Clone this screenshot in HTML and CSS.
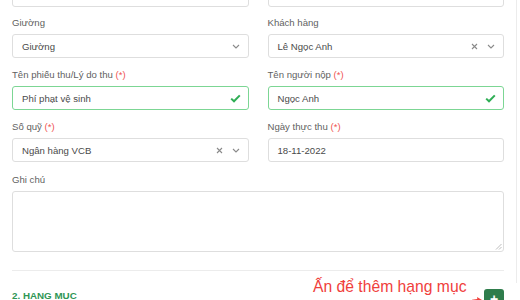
FILE: index.html
```html
<!DOCTYPE html>
<html lang="vi">
<head>
<meta charset="utf-8">
<link rel="stylesheet" href="styles.css">
</head>
<body>
<div class="frame">
  <div class="grid prev">
    <div class="control"></div>
    <div class="control"></div>
  </div>
  <div class="grid form">
    <div class="group">
      <label class="label">Giường</label>
      <div class="control select">
        <span class="value">Giường</span>
        <span class="icons">
          <svg class="chev" width="8" height="5" viewBox="0 0 8 5"><path d="M1 1 L4 4 L7 1" fill="none" stroke="#8a8a8a" stroke-width="1.1"/></svg>
        </span>
      </div>
    </div>
    <div class="group">
      <label class="label">Khách hàng</label>
      <div class="control select">
        <span class="value">Lê Ngọc Anh</span>
        <span class="icons">
          <svg class="clear" width="7" height="7" viewBox="0 0 7 7"><path d="M1 1 L6 6 M6 1 L1 6" fill="none" stroke="#8a8a8a" stroke-width="1.1"/></svg>
          <svg class="chev" width="8" height="5" viewBox="0 0 8 5"><path d="M1 1 L4 4 L7 1" fill="none" stroke="#8a8a8a" stroke-width="1.1"/></svg>
        </span>
      </div>
    </div>
    <div class="group">
      <label class="label">Tên phiếu thu/Lý do thu <span class="req">(*)</span></label>
      <div class="control valid">
        <span class="value">Phí phạt vệ sinh</span>
        <span class="icons">
          <svg width="11" height="9" viewBox="0 0 11 9"><path d="M1.2 4.6 L4 7.3 L9.8 1.4" fill="none" stroke="#2fae55" stroke-width="2"/></svg>
        </span>
      </div>
    </div>
    <div class="group">
      <label class="label">Tên người nộp <span class="req">(*)</span></label>
      <div class="control valid">
        <span class="value">Ngọc Anh</span>
        <span class="icons">
          <svg width="11" height="9" viewBox="0 0 11 9"><path d="M1.2 4.6 L4 7.3 L9.8 1.4" fill="none" stroke="#2fae55" stroke-width="2"/></svg>
        </span>
      </div>
    </div>
    <div class="group">
      <label class="label">Số quỹ <span class="req">(*)</span></label>
      <div class="control select">
        <span class="value">Ngân hàng VCB</span>
        <span class="icons">
          <svg class="clear" width="7" height="7" viewBox="0 0 7 7"><path d="M1 1 L6 6 M6 1 L1 6" fill="none" stroke="#8a8a8a" stroke-width="1.1"/></svg>
          <svg class="chev" width="8" height="5" viewBox="0 0 8 5"><path d="M1 1 L4 4 L7 1" fill="none" stroke="#8a8a8a" stroke-width="1.1"/></svg>
        </span>
      </div>
    </div>
    <div class="group">
      <label class="label">Ngày thực thu <span class="req">(*)</span></label>
      <div class="control">
        <span class="value">18-11-2022</span>
      </div>
    </div>
    <div class="group wide">
      <label class="label">Ghi chú</label>
      <div class="control textarea">
        <svg class="grip" width="7" height="7" viewBox="0 0 7 7"><path d="M6.5 1 L1 6.5 M6.5 4 L4 6.5" fill="none" stroke="#b5b5b5" stroke-width="0.9"/></svg>
      </div>
    </div>
  </div>
  <hr class="divider">
  <div class="section">
    <h2 class="section-title">2. HẠNG MỤC</h2>
    <button class="add-btn">+</button>
    <span class="hint">Ấn để thêm hạng mục</span>
    <svg class="hint-arrow" width="10" height="6" viewBox="0 0 10 6"><path d="M0 3.5 L7 2.5" stroke="#f0403c" stroke-width="1.4" fill="none"/><path d="M5 0 L10 3 L6 6 Z" fill="#f0403c"/></svg>
  </div>
</div>
</body>
</html>
```

FILE: styles.css
```css
* { box-sizing: border-box; }
html, body { margin: 0; padding: 0; background: #fff; }
body {
  font-family: "Liberation Sans", Arial, sans-serif;
  font-size: 9.6px;
  color: #555;
  overflow: hidden;
  height: 300px;
}
.frame {
  width: 517px;
  height: 300px;
  padding: 0 12px;
  border-right: 1px solid #ececec;
}
.grid {
  display: grid;
  grid-template-columns: 1fr 1fr;
  column-gap: 19px;
}
.prev { margin-top: -17px; }
.form {
  margin-top: 9px;
  row-gap: 10px;
}
.group { display: flex; flex-direction: column; }
.group.wide { grid-column: 1 / 3; margin-top: 1px; }
.label {
  line-height: 14px;
  height: 14px;
  margin-bottom: 4px;
  color: #5f5f5f;
}
.req { color: #ef5350; }
.control {
  height: 24px;
  border: 1px solid #dedede;
  border-radius: 3px;
  display: flex;
  align-items: center;
  padding: 0 9px;
  background: #fff;
}
.value { flex: 1; color: #4a4a4a; }
.icons { display: flex; align-items: center; gap: 9px; }
.select .icons { margin-right: -1px; }
.valid { border-color: #7cd694; }
.valid .icons { margin-right: -2px; }
.textarea {
  height: 61px;
  position: relative;
}
.grip { position: absolute; right: 1px; bottom: 1px; }
.divider {
  border: 0;
  border-top: 1px solid #ececec;
  margin: 18px 0 0;
  height: 0;
}
.section {
  position: relative;
  display: flex;
  justify-content: space-between;
  align-items: flex-start;
  margin-top: 17px;
}
.section-title {
  margin: 2px 0 0;
  font-size: 9.8px;
  font-weight: bold;
  color: #2f9655;
  line-height: 12px;
}
.add-btn {
  width: 20px;
  height: 20px;
  border: 0;
  border-radius: 3px;
  background: #2f7d4c;
  color: #fff;
  font-family: "Liberation Sans", Arial, sans-serif;
  font-size: 14px;
  font-weight: bold;
  line-height: 20px;
  padding: 0;
  margin-top: 1px;
}
.hint {
  position: absolute;
  left: 301px;
  top: -10px;
  font-size: 15.7px;
  color: #f0403c;
  white-space: nowrap;
  line-height: 18px;
}
.hint-arrow {
  position: absolute;
  left: 460px;
  top: 9px;
}
```
